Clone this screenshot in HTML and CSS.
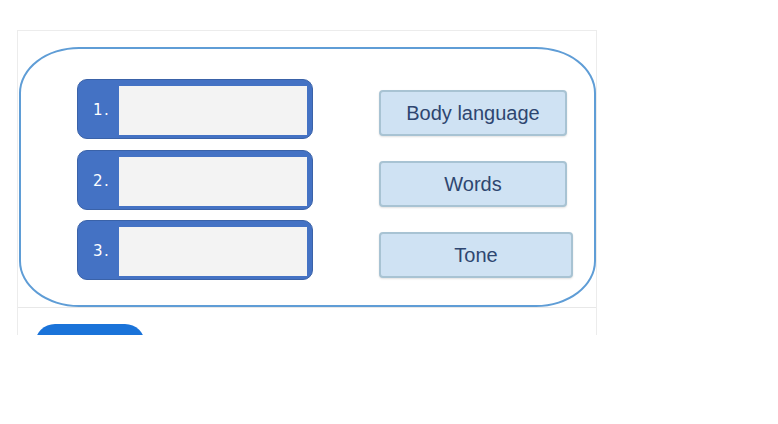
FILE: index.html
```html
<!DOCTYPE html>
<html lang="en">
<head>
  <meta charset="UTF-8" />
  <title>Matching activity</title>
  <link rel="stylesheet" href="styles.css">
</head>
<body>
  <div class="frame">
    <div class="stage">
      <div class="board">
        <div class="slots">
          <div class="slot"><span class="slot-num">1.</span><div class="slot-drop"></div></div>
          <div class="slot"><span class="slot-num">2.</span><div class="slot-drop"></div></div>
          <div class="slot"><span class="slot-num">3.</span><div class="slot-drop"></div></div>
        </div>
        <div class="choices">
          <button type="button" class="choice">Body language</button>
          <button type="button" class="choice">Words</button>
          <button type="button" class="choice choice-wide">Tone</button>
        </div>
      </div>
    </div>
    <div class="footer">
      <button type="button" class="check-btn" aria-label="Check"></button>
    </div>
  </div>
</body>
</html>
```

FILE: styles.css
```css
body {
  margin: 0;
  padding: 30px 0 0 17px;
  background: #fff;
  font-family: 'Liberation Sans', Arial, sans-serif;
}

.frame {
  width: 578px;
  height: 304px;
  border: 1px solid #ececec;
  border-bottom: none;
  overflow: hidden;
}

.stage {
  padding: 16px 0 0 1px;
  border-bottom: 1px solid #e8e8e8;
}

.board {
  width: 577px;
  height: 260px;
  border: 2px solid #5f9dd6;
  border-radius: 60px / 46px;
  display: flex;
  padding: 30px 0 0 56px;
  box-sizing: border-box;
}

.slots {
  display: flex;
  flex-direction: column;
  gap: 10.5px;
  width: 236px;
}

.slot {
  display: flex;
  height: 60px;
  background: #4472c4;
  border: 1px solid #3a62a8;
  border-radius: 10px;
  box-sizing: border-box;
  padding: 6px 5px 3px 0;
}

.slot-num {
  width: 41px;
  color: #fff;
  font-family: 'DejaVu Sans', Verdana, sans-serif;
  font-size: 15px;
  letter-spacing: 1.5px;
  padding-left: 15px;
  box-sizing: border-box;
  align-self: center;
  margin-top: -1px;
}

.slot-drop {
  flex: 1;
  background: #f3f3f3;
}

.choices {
  display: flex;
  flex-direction: column;
  align-items: flex-start;
  margin-left: 66px;
  padding-top: 11px;
  gap: 25px;
}

.choice {
  width: 188px;
  height: 46px;
  background: #cfe2f3;
  border: 2px solid #a8c3d3;
  border-radius: 4px;
  box-shadow: 0 1px 2px rgba(0, 0, 0, 0.12);
  color: #2e4670;
  font-family: 'Liberation Sans', Arial, sans-serif;
  font-size: 20px;
  padding: 0;
}

.choice-wide {
  width: 194px;
}

.footer {
  padding: 16px 0 0 17px;
}

.check-btn {
  width: 110px;
  height: 40px;
  background: #1a73d9;
  border: none;
  border-radius: 20px;
}
```
